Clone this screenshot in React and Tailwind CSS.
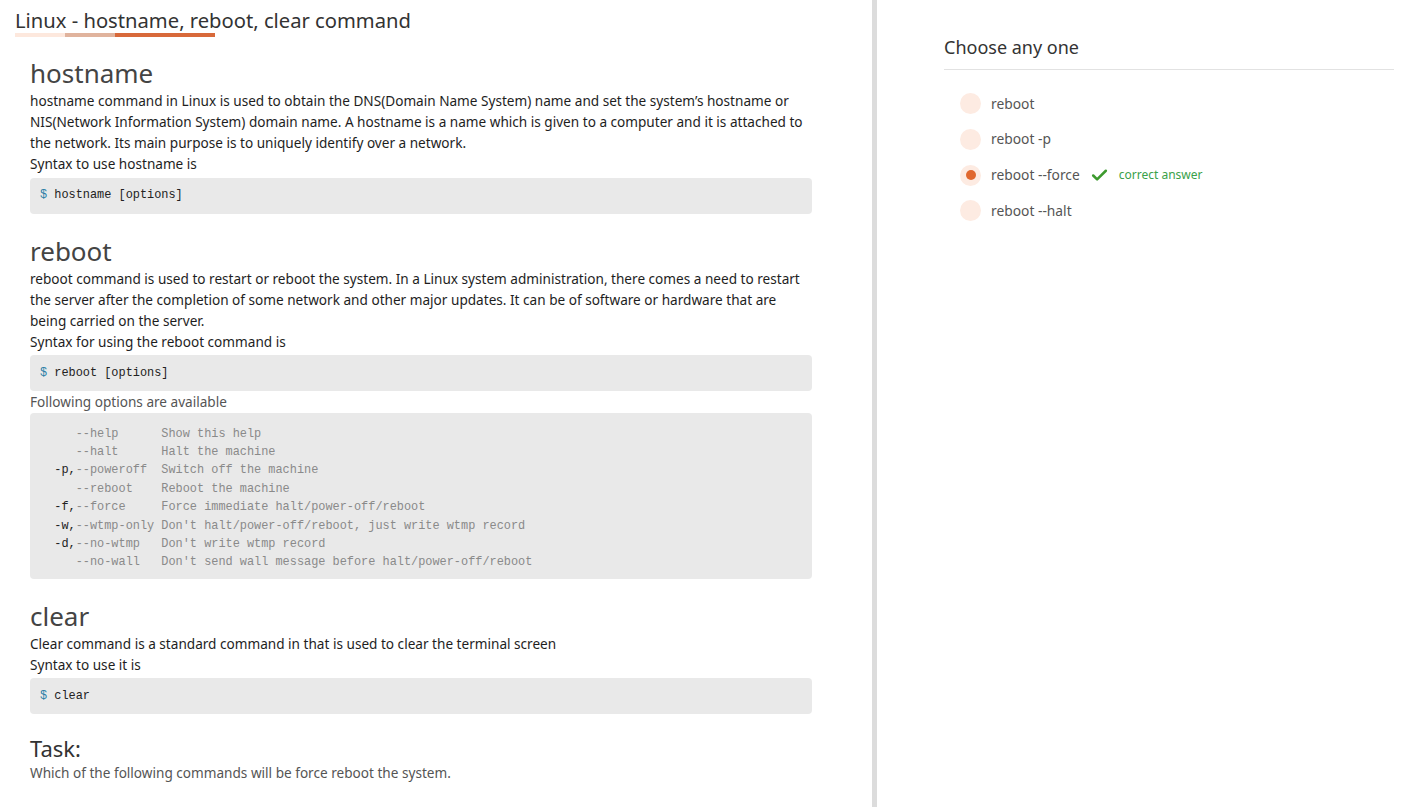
import { Check } from "lucide-react";

const options = [
  ["", "--help", "      ", "Show this help"],
  ["", "--halt", "      ", "Halt the machine"],
  ["-p,", "--poweroff", "  ", "Switch off the machine"],
  ["", "--reboot", "    ", "Reboot the machine"],
  ["-f,", "--force", "     ", "Force immediate halt/power-off/reboot"],
  ["-w,", "--wtmp-only", " ", "Don't halt/power-off/reboot, just write wtmp record"],
  ["-d,", "--no-wtmp", "   ", "Don't write wtmp record"],
  ["", "--no-wall", "   ", "Don't send wall message before halt/power-off/reboot"],
];

const choices = ["reboot", "reboot -p", "reboot --force", "reboot --halt"];

const CodeBlock = ({ cmd }) => (
  <div className="mt-[3.5px] h-[36px] flex items-center bg-[#e9e9e9] rounded-[4px] px-[10px] font-['Liberation_Mono',monospace] text-[11.9px] text-[#222]">
    <span className="whitespace-pre">
      <span className="text-[#2c7fa6]">$</span>
      {" " + cmd}
    </span>
  </div>
);

export default function App() {
  return (
    <div className="flex h-[807px] bg-white font-['Noto_Sans',sans-serif] overflow-hidden">
      {/* left: lesson */}
      <div className="w-[872px] shrink-0">
        <div className="pl-[15px] pt-[7px]">
          <h1 className="text-[20.2px] leading-[26px] text-[#333]">Linux - hostname, reboot, clear command</h1>
          <div className="flex h-[4px]">
            <div className="w-[50px] bg-[#fde8dd]"></div>
            <div className="w-[50px] bg-[#e0b39d]"></div>
            <div className="w-[100px] bg-[#d8693a]"></div>
          </div>
        </div>

        <div className="px-[30px] w-[842px] text-[13.6px] leading-[21px] text-[#1e1e1e]">
          <h2 className="mt-[20px] text-[26px] leading-[33px] text-[#444]">hostname</h2>
          <p className="whitespace-nowrap">
            hostname command in Linux is used to obtain the DNS(Domain Name System) name and set the system’s hostname or<br />
            NIS(Network Information System) domain name. A hostname is a name which is given to a computer and it is attached to<br />
            the network. Its main purpose is to uniquely identify over a network.<br />
            Syntax to use hostname is
          </p>
          <div className="w-[782px]">
            <CodeBlock cmd="hostname [options]" />
          </div>

          <h2 className="mt-[21px] text-[26px] leading-[33px] text-[#444]">reboot</h2>
          <p className="whitespace-nowrap">
            reboot command is used to restart or reboot the system. In a Linux system administration, there comes a need to restart<br />
            the server after the completion of some network and other major updates. It can be of software or hardware that are<br />
            being carried on the server.<br />
            Syntax for using the reboot command is
          </p>
          <div className="w-[782px]">
            <CodeBlock cmd="reboot [options]" />
          </div>
          <p className="text-[#555]">Following options are available</p>
          <div className="w-[782px] mt-[1px] bg-[#e9e9e9] rounded-[4px] px-[10px] pt-[11.5px] pb-[7.5px] font-['Liberation_Mono',monospace] text-[11.9px] leading-[18.4px] whitespace-pre">
            {options.map(([short, long, pad, desc], i) => (
              <div key={i}>
                <span className="text-[#222]">{short ? "  " + short : "     "}</span>
                <span className="text-[#8a8a8a]">{long + pad + desc}</span>
              </div>
            ))}
          </div>

          <h2 className="mt-[20.5px] text-[26px] leading-[33px] text-[#444]">clear</h2>
          <p className="whitespace-nowrap">
            Clear command is a standard command in that is used to clear the terminal screen<br />
            Syntax to use it is
          </p>
          <div className="w-[782px]">
            <CodeBlock cmd="clear" />
          </div>

          <h2 className="mt-[20px] text-[22px] leading-[28px] text-[#333]">Task:</h2>
          <p className="text-[#555]">Which of the following commands will be force reboot the system.</p>
        </div>
      </div>

      <div className="w-[5px] shrink-0 bg-[#dcdcdc]"></div>

      {/* right: quiz */}
      <div className="flex-1 pl-[67px] pr-[11px]">
        <div className="mt-[35px] pb-[10px] border-b border-[#e2e2e2]">
          <h3 className="text-[18px] leading-[24px] text-[#333]">Choose any one</h3>
        </div>
        <div className="mt-[16px] pl-[16px]">
          {choices.map((c, i) => (
            <div key={c} className="h-[35.7px] flex items-center gap-[10px] text-[13.8px] text-[#555]">
              <span className="w-[21px] h-[21px] rounded-full bg-[#fdebe2] flex items-center justify-center">
                {i === 2 && <span className="w-[10px] h-[10px] rounded-full bg-[#e0682f]"></span>}
              </span>
              <span>{c}</span>
              {i === 2 && (
                <span className="flex items-center gap-[10px]">
                  <Check className="w-[19px] h-[19px] text-[#3d9a2e]" strokeWidth={3.2} />
                  <span className="text-[12px] text-[#3aa14a]">correct answer</span>
                </span>
              )}
            </div>
          ))}
        </div>
      </div>
    </div>
  );
}
